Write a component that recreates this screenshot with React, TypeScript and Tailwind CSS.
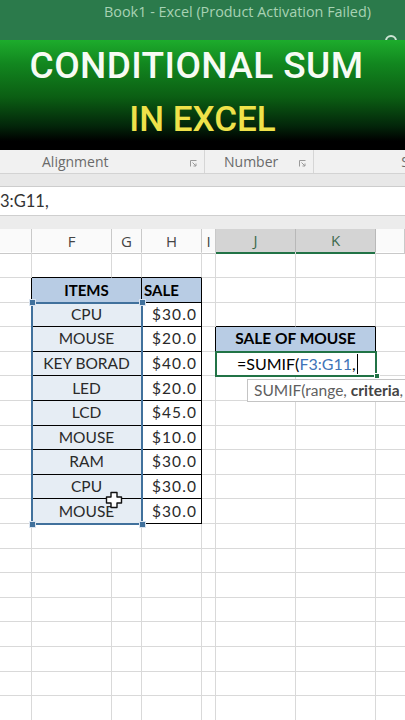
import React from 'react';

const COLS = ['E', 'F', 'G', 'H', 'I', 'J', 'K', 'L'];
const ROW_COUNT = 19;

const items = ['CPU', 'MOUSE', 'KEY BORAD', 'LED', 'LCD', 'MOUSE', 'RAM', 'CPU', 'MOUSE'];
const sales = ['$30.0', '$20.0', '$40.0', '$20.0', '$45.0', '$10.0', '$30.0', '$30.0', '$30.0'];

const grid = 'border-r border-b border-[#d9d9d9]';

function Launcher() {
  return (
    <svg width="7" height="7" viewBox="0 0 7 7" className="text-[#9a9a9a]">
      <path d="M0.5 6.5V0.5H6.5" fill="none" stroke="currentColor" strokeWidth="1" />
      <path d="M2.5 2.5L6 6M6 3.5V6H3.5" fill="none" stroke="currentColor" strokeWidth="1" />
    </svg>
  );
}

function Cursor() {
  return (
    <svg width="18" height="18" viewBox="0 0 18 18">
      <path
        d="M6 1.5H12V6H16.5V12H12V16.5H6V12H1.5V6H6Z"
        fill="#ffffff"
        stroke="#111111"
        strokeWidth="1.4"
        strokeLinejoin="round"
      />
    </svg>
  );
}

function Row({ r }: { r: number }) {
  const dataIdx = r - 3;
  const isData = r >= 3 && r <= 11;
  const cells: React.ReactNode[] = [];

  // column E
  cells.push(
    <div
      key="e"
      className={
        r >= 2 && r <= 11
          ? 'border-r border-b border-r-black border-b-[#d9d9d9]'
          : grid
      }
    />
  );

  // F + G
  if (r === 2) {
    cells.push(
      <div
        key="fg"
        className="col-span-2 flex items-center justify-center border-r border-b border-black bg-[#b8cce4] text-[15px] font-bold text-black"
      >
        ITEMS
      </div>
    );
  } else if (isData) {
    cells.push(
      <div
        key="fg"
        className="col-span-2 flex items-center justify-center border-r border-b border-black bg-[#e6edf4] text-[15.5px] text-[#2a2a2a]"
      >
        {items[dataIdx]}
      </div>
    );
  } else if (r === 12) {
    cells.push(<div key="fg" className={`col-span-2 ${grid}`} />);
  } else {
    cells.push(
      <div key="f" className={r === 1 ? 'border-r border-b border-r-[#d9d9d9] border-b-black' : grid} />,
      <div key="g" className={r === 1 ? 'border-r border-b border-r-[#d9d9d9] border-b-black' : grid} />
    );
  }

  // H
  if (r === 2) {
    cells.push(
      <div
        key="h"
        className="flex items-center border-r border-b border-black bg-[#b8cce4] pl-[2px] text-[15px] font-bold text-black"
      >
        SALE
      </div>
    );
  } else if (isData) {
    cells.push(
      <div
        key="h"
        className="flex items-center justify-end border-r border-b border-black bg-white pr-[4px] text-[15.5px] tracking-[1.1px] text-[#2a2a2a]"
      >
        {sales[dataIdx]}
      </div>
    );
  } else {
    cells.push(<div key="h" className={r === 1 ? 'border-r border-b border-r-[#d9d9d9] border-b-black' : grid} />);
  }

  // I
  cells.push(
    <div key="i" className={r === 4 ? 'border-r border-b border-r-black border-b-[#d9d9d9]' : grid} />
  );

  // J + K
  if (r === 4) {
    cells.push(
      <div
        key="jk"
        className="col-span-2 flex items-center justify-center border-r border-b border-black bg-[#b8cce4] text-[15.5px] font-bold text-black"
      >
        SALE OF MOUSE
      </div>
    );
  } else if (r === 5) {
    cells.push(
      <div key="jk" className={`col-span-2 flex items-center pl-[21px] text-[16px] text-black ${grid}`}>
        <span>=SUMIF(</span>
        <span className="text-[#3f74b8]">F3:G11</span>
        <span>,</span>
        <span className="ml-[1px] h-[20px] w-px bg-black" />
      </div>
    );
  } else {
    cells.push(
      <div key="j" className={r === 3 ? 'border-r border-b border-r-[#d9d9d9] border-b-black' : grid} />,
      <div key="k" className={r === 3 ? 'border-r border-b border-r-[#d9d9d9] border-b-black' : grid} />
    );
  }

  // L
  cells.push(<div key="l" className="border-b border-[#d9d9d9]" />);

  return <>{cells}</>;
}

export default function App() {
  const rows = Array.from({ length: ROW_COUNT }, (_, i) => i + 1);

  return (
    <div className="relative h-[720px] w-[405px] overflow-hidden bg-white font-['Lato','Liberation_Sans',sans-serif]">
      {/* Excel title bar */}
      <div className="relative h-[40px] overflow-hidden bg-[#2b7a4b] font-['Open_Sans','Liberation_Sans',sans-serif]">
        <div className="pt-[1px] pl-[104px] text-[14.4px] leading-[22px] whitespace-nowrap text-[#a8d2b4]">
          Book1 - Excel (Product Activation Failed)
        </div>
        <span className="absolute top-[35px] right-[8px] h-[12px] w-[12px] rounded-full border-2 border-[#cfe5d6]" />
      </div>

      {/* Banner */}
      <div className="flex h-[110px] flex-col items-center bg-[linear-gradient(180deg,#1dac2c_0%,#12861f_22%,#0b5e13_52%,#03260a_78%,#000000_92%)] font-['Roboto','Liberation_Sans',sans-serif] font-medium">
        <div className="mt-[4px] mr-[12px] text-[37px] leading-[44px] tracking-[0.4px] text-[#f7fbf4]">CONDITIONAL SUM</div>
        <div className="mt-[11px] text-[35px] leading-[42px] text-[#efe24a]">IN EXCEL</div>
      </div>

      {/* Ribbon group labels */}
      <div className="flex h-[23px] items-center bg-[#f1f1f1] font-['Open_Sans','Liberation_Sans',sans-serif] text-[14px] text-[#6a6a6a]">
        <div className="flex h-full w-[205px] items-center border-r border-[#d6d6d6] pl-[42px]">
          <span>Alignment</span>
          <span className="ml-auto mr-[7px] mt-[3px]">
            <Launcher />
          </span>
        </div>
        <div className="flex h-full w-[109px] items-center border-r border-[#d6d6d6] pl-[19px]">
          <span>Number</span>
          <span className="ml-auto mr-[7px] mt-[3px]">
            <Launcher />
          </span>
        </div>
        <div className="ml-auto text-right">
          <span className="mr-[-4px]">S</span>
        </div>
      </div>

      {/* Gap under ribbon */}
      <div className="h-[14px] border-t border-b border-t-[#d3d3d3] border-b-[#cdcdcd] bg-[#e8e8e8]" />

      {/* Formula bar */}
      <div className="flex h-[29px] items-center border-b border-[#cfcfcf] bg-white text-[16.5px] text-[#333333]">
        3:G11,
      </div>

      <div className="h-[13px] bg-[#ececec]" />

      {/* Column headers */}
      <div className="grid h-[23px] grid-cols-[32px_80px_30px_60px_14px_80px_80px_29px] bg-[#fafafa] font-['Open_Sans','Liberation_Sans',sans-serif] text-[15px] text-[#444444]">
        {COLS.map((c) => {
          const active = c === 'J' || c === 'K';
          if (c === 'E' || c === 'L') {
            return <div key={c} className="border-r border-b border-[#c9c9c9]" />;
          }
          return (
            <div
              key={c}
              className={
                active
                  ? 'flex items-center justify-center border-r border-b-2 border-r-[#b8b8b8] border-b-[#217346] bg-[#d4d4d4] text-[#3c6a4d]'
                  : 'flex items-center justify-center border-r border-b border-[#c9c9c9]'
              }
            >
              {c}
            </div>
          );
        })}
      </div>

      {/* Cells */}
      <div className="relative">
        <div className="grid grid-cols-[32px_80px_30px_60px_14px_80px_80px_29px] grid-rows-[26px] auto-rows-[24.6px]">
          {rows.map((r) => (
            <Row key={r} r={r} />
          ))}
        </div>

        {/* selection range F3:G11 */}
        <div className="absolute top-[49.6px] left-[31px] h-[223.4px] w-[112px] border-2 border-[#41719c]" />
        {[
          'top-[47.1px] left-[28.5px]',
          'top-[47.1px] left-[138.5px]',
          'top-[268.5px] left-[28.5px]',
          'top-[268.5px] left-[138.5px]',
        ].map((pos) => (
          <div key={pos} className={`absolute ${pos} h-[7px] w-[7px] border border-[#d9e3ef] bg-[#41719c]`} />
        ))}

        {/* active cell */}
        <div className="absolute top-[98.8px] left-[215px] h-[26.6px] w-[162px] border-2 border-[#217346]" />
        <div className="absolute top-[121.4px] left-[373.5px] h-[6px] w-[6px] border border-white bg-[#217346]" />

        {/* function tooltip */}
        <div className="absolute top-[127px] left-[247px] flex h-[23px] w-[170px] items-center border border-[#c4c4c4] bg-white pl-[6px] text-[15.5px] whitespace-nowrap text-[#5f5f5f]">
          SUMIF(range, <span className="ml-[4px] font-bold text-[#444444]">criteria</span>,
        </div>

        {/* mouse cursor */}
        <div className="absolute top-[239px] left-[105px]">
          <Cursor />
        </div>
      </div>
    </div>
  );
}
